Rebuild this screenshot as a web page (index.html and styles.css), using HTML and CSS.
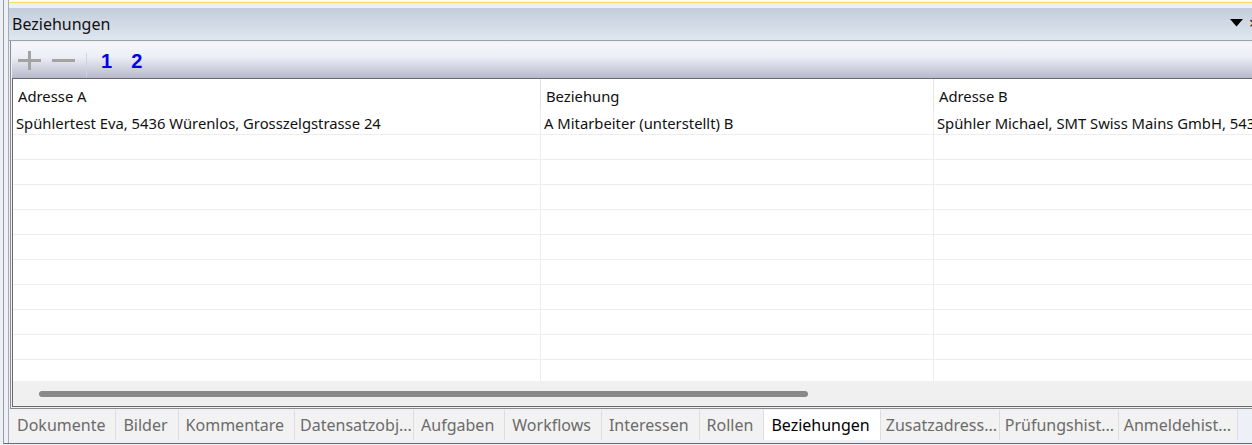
FILE: index.html
```html
<!DOCTYPE html>
<html lang="de">
<head>
<meta charset="utf-8">
<title>Beziehungen</title>
<link rel="stylesheet" href="styles.css">
</head>
<body>
<div class="frame">
  <div class="panel">
    <div class="topbox"></div>
    <div class="titlebar">
      <span class="title">Beziehungen</span>
      <span class="ctrls">
        <svg class="caret" width="13" height="8" viewBox="0 0 13 8"><polygon points="0,0 13,0 6.5,7.5" fill="#000"/></svg>
        <span class="close">×</span>
      </span>
    </div>
    <div class="body">
      <div class="toolbar">
        <svg class="tb-icon" width="23" height="19" viewBox="0 0 23 19"><path d="M0 9.5H23M11.5 0V19" stroke="#a3a3a3" stroke-width="3" fill="none"/></svg>
        <svg class="tb-icon" width="23" height="19" viewBox="0 0 23 19"><path d="M0 9.5H23" stroke="#a3a3a3" stroke-width="3" fill="none"/></svg>
        <span class="tb-sep"></span>
        <span class="tb-num">1</span>
        <span class="tb-num">2</span>
      </div>
      <div class="grid">
        <div class="row head">
          <div class="cell c1">Adresse A</div>
          <div class="cell c2">Beziehung</div>
          <div class="cell c3">Adresse B</div>
        </div>
        <div class="row">
          <div class="cell c1">Spühlertest Eva, 5436 Würenlos, Grosszelgstrasse 24</div>
          <div class="cell c2">A Mitarbeiter (unterstellt) B</div>
          <div class="cell c3">Spühler Michael, SMT Swiss Mains GmbH, 5436 Würenlos</div>
        </div>
        <div class="row"><div class="cell c1"></div><div class="cell c2"></div><div class="cell c3"></div></div>
        <div class="row"><div class="cell c1"></div><div class="cell c2"></div><div class="cell c3"></div></div>
        <div class="row"><div class="cell c1"></div><div class="cell c2"></div><div class="cell c3"></div></div>
        <div class="row"><div class="cell c1"></div><div class="cell c2"></div><div class="cell c3"></div></div>
        <div class="row"><div class="cell c1"></div><div class="cell c2"></div><div class="cell c3"></div></div>
        <div class="row"><div class="cell c1"></div><div class="cell c2"></div><div class="cell c3"></div></div>
        <div class="row"><div class="cell c1"></div><div class="cell c2"></div><div class="cell c3"></div></div>
        <div class="row"><div class="cell c1"></div><div class="cell c2"></div><div class="cell c3"></div></div>
        <div class="row"><div class="cell c1"></div><div class="cell c2"></div><div class="cell c3"></div></div>
        <div class="row last"><div class="cell c1"></div><div class="cell c2"></div><div class="cell c3"></div></div>
        <div class="hscroll"><div class="thumb"></div></div>
      </div>
    </div>
    <div class="tabs">
      <span class="tab">Dokumente</span>
      <span class="tab">Bilder</span>
      <span class="tab">Kommentare</span>
      <span class="tab trunc">Datensatzobj...</span>
      <span class="tab">Aufgaben</span>
      <span class="tab">Workflows</span>
      <span class="tab">Interessen</span>
      <span class="tab">Rollen</span>
      <span class="tab active">Beziehungen</span>
      <span class="tab trunc">Zusatzadress...</span>
      <span class="tab trunc">Prüfungshist...</span>
      <span class="tab trunc">Anmeldehist...</span>
    </div>
  </div>
</div>
</body>
</html>
```
FILE: styles.css
```css
html, body {
  margin: 0;
  padding: 0;
  overflow: hidden;
}

body {
  width: 1252px;
  height: 445px;
  background: #eef0f8;
  font-family: "Noto Sans", "Open Sans", sans-serif;
  color: #111;
}

/* outer window frame */
.frame {
  margin-left: 3px;
  width: 1274px;
  height: 443px;
  border-left: 1px solid #9a9a9a;
  border-bottom: 1px solid #6a6a6a;
  padding-left: 4px;
  box-sizing: content-box;
}

.panel {
  display: flex;
  flex-direction: column;
  height: 443px;
  border-left: 1px solid #a8acb4;
}

/* strip of the editor above, with its yellow focus edge */
.topbox {
  height: 2px;
  background: #fdfbee;
  border-bottom: 1px solid #f0d870;
  margin-bottom: 5px;
  margin-left: -1px;
  border-left: 1px solid #a8acb4;
}

.titlebar {
  height: 32px;
  display: flex;
  align-items: center;
  justify-content: space-between;
  background: linear-gradient(#c3cdda, #dfe7f0);
  border-bottom: 1px solid #9aa2ae;
  padding-left: 3px;
}

.title {
  font-size: 16px;
  color: #111;
  line-height: 1;
  margin-top: -1px;
}

.ctrls {
  display: flex;
  align-items: center;
  gap: 6px;
  width: 52px;
  margin-top: -2px;
}

.caret {
  display: block;
}

.close {
  font-size: 16px;
  line-height: 1;
}

.body {
  margin-left: 1px;
  padding: 1px 0 0 1px;
  border-left: 1px solid #8c8c8c;
  border-bottom: 1px solid #8c8c8c;
  background: #f2f2f2;
}

.toolbar {
  height: 35px;
  display: flex;
  align-items: center;
  padding-left: 6px;
  margin-top: 1px;
  background: linear-gradient(#f6f7fc 0%, #eceef6 40%, #b8b8cc 100%);
}

.tb-icon {
  display: block;
  margin-right: 11px;
}

.tb-sep {
  width: 1px;
  height: 24px;
  background: #d2d2da;
  margin: 8px 14px 0 0;
}

.tb-num {
  font-family: "Liberation Sans", Arial, sans-serif;
  font-weight: bold;
  font-size: 20px;
  color: #0000e8;
  margin-right: 19px;
  line-height: 1;
  margin-top: 1px;
}

/* relations table */
.grid {
  border-top: 1px solid #6a6a6a;
  border-left: 1px solid #6a6a6a;
  border-bottom: 1px solid #6a6a6a;
  background: #fff;
  margin-bottom: 1px;
  overflow: hidden;
}

.row {
  display: grid;
  grid-template-columns: 528px 393px 420px;
  height: 25px;
  box-sizing: border-box;
  border-bottom: 1px solid #ededed;
  font-size: 14.8px;
  white-space: nowrap;
}

.row.head {
  height: 31px;
  border-bottom: none;
}

.row.last {
  height: 21px;
  border-bottom: none;
}

.cell {
  border-right: 1px solid #ececec;
  padding-left: 3px;
  padding-top: 1px;
  display: flex;
  align-items: center;
  overflow: hidden;
}

.head .cell {
  padding-left: 5px;
  padding-top: 3px;
  border-right-color: #e4e4e4;
}

.hscroll {
  height: 25px;
  background: #f0f0f0;
  display: flex;
  align-items: center;
  padding-left: 26px;
}

.thumb {
  width: 769px;
  height: 6px;
  border-radius: 3px;
  background: #898989;
}

/* bottom tab strip */
.tabs {
  display: flex;
  margin-left: 1px;
  padding-top: 1px;
  height: 30px;
}

.tab {
  display: flex;
  align-items: center;
  padding: 0 10px 0 7px;
  background: #f2f2f2;
  border-right: 1px solid #dedede;
  font-size: 16px;
  color: #6b6b6b;
  white-space: nowrap;
}

.tab.trunc {
  width: 119px;
  box-sizing: border-box;
  overflow: hidden;
  padding-right: 0;
  padding-left: 5px;
}

.tab.active {
  background: #fff;
  color: #000;
}
```
